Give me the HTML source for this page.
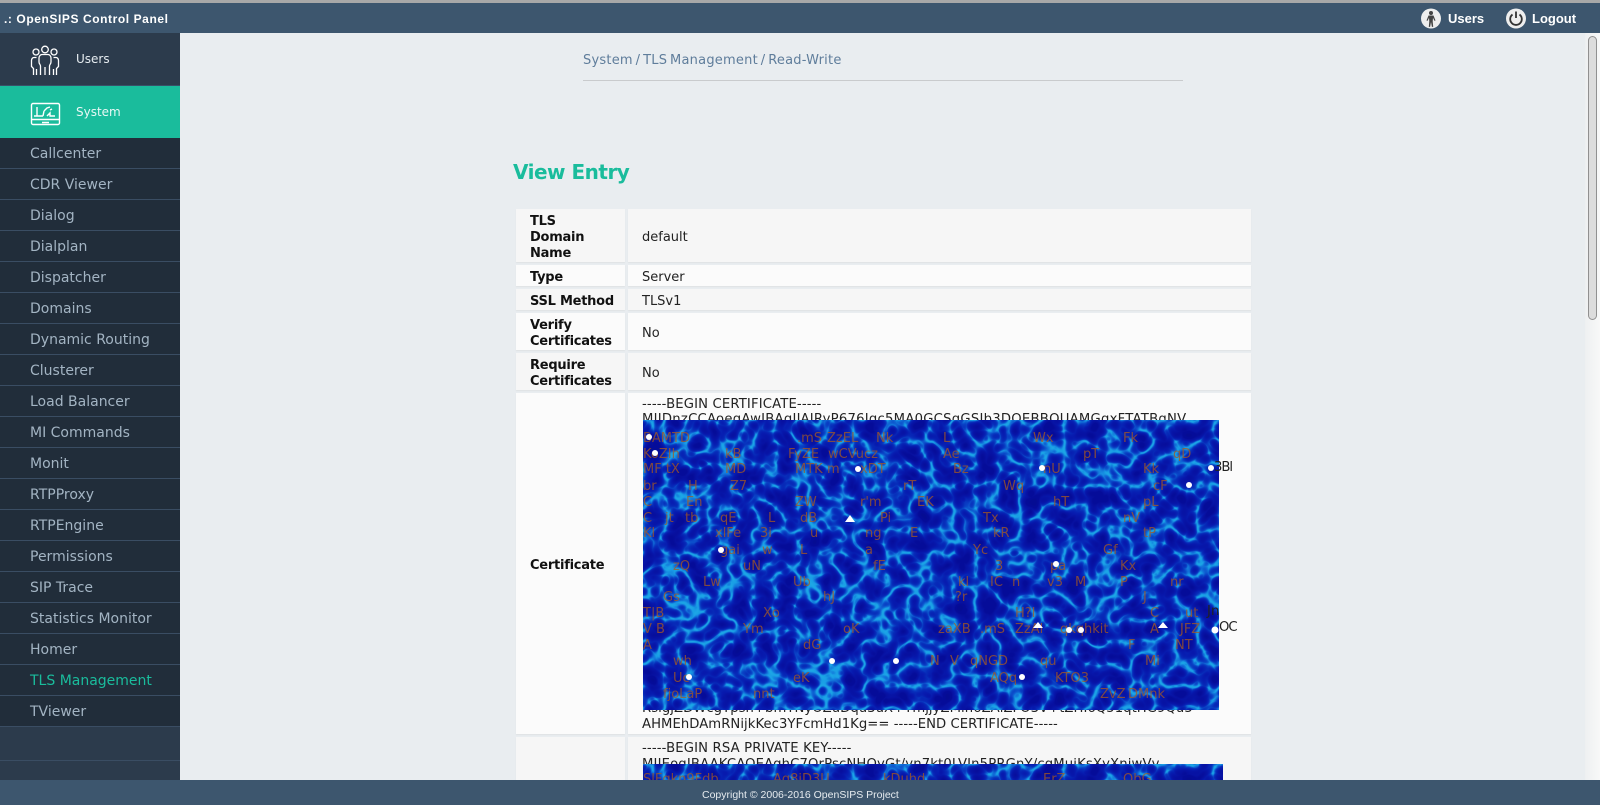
<!DOCTYPE html>
<html><head><meta charset="utf-8"><title>OpenSIPS Control Panel</title>
<style>
html,body{margin:0;padding:0;width:1600px;height:805px;overflow:hidden;background:#e9edf0}
body{position:relative;font-family:"DejaVu Sans",sans-serif}
.a{position:absolute;white-space:nowrap}
#top{position:absolute;left:0;top:0;width:1600px;height:33px;background:#3d566e;border-top:3px solid #a8a8a8;box-sizing:border-box;z-index:5}
#foot{position:absolute;left:0;top:780px;width:1600px;height:25px;background:#3d566e;z-index:5}
#side{position:absolute;left:0;top:33px;width:180px;height:747px;background:#2c3b4c}
.it{position:absolute;left:0;width:180px;height:30px;border-bottom:1px solid #3a4d63;background:#212d3a;color:#a3b4c3;font-size:14px;line-height:32px;text-indent:30px}
.c{position:absolute;background:#f6f6f6;box-shadow:0 1px 1px #dfe2e4}
.c.w{background:#fbfbfb}
.l{position:absolute;left:530px;font:bold 13px/16px "DejaVu Sans",sans-serif;color:#111;letter-spacing:-.25px}
.v{position:absolute;left:642px;font-size:13px;line-height:16px;color:#222;white-space:nowrap;letter-spacing:0}
.m{position:absolute;left:642px;font-size:13.200px;line-height:16px;color:#222;white-space:nowrap;letter-spacing:.15px}
svg text{font-family:"DejaVu Sans",sans-serif;font-size:13px}
</style></head><body>

<div id="top"></div>
<div class="a" style="left:4px;top:12px;font:bold 12px/15px 'Liberation Sans',sans-serif;color:#fff;letter-spacing:.58px;z-index:6">.: OpenSIPS Control Panel</div>
<svg class="a" style="left:1420px;top:7px;z-index:6" width="110" height="24" viewBox="0 0 110 24">
<circle cx="11" cy="11.500" r="10" fill="#eee"/>
<circle cx="11" cy="6" r="2" fill="#444"/>
<path d="M8.500 8.500h5l2 5-1 .4-1.500-3-.3 3.500.5 5.500h-1.300L11 15l-.9 4.900H8.800l.5-5.500-.3-3.500-1.500 3-1-.4z" fill="#444"/>
<circle cx="96" cy="11.500" r="10" fill="#eee"/>
<path d="M92.500 7.500a5.800 5.800 0 1 0 7 0" fill="none" stroke="#333" stroke-width="1.800"/>
<path d="M96 4.500v6.500" stroke="#333" stroke-width="1.800"/>
</svg>
<div class="a" style="left:1448px;top:11px;font:bold 13px/15px 'Liberation Sans',sans-serif;color:#fff;z-index:6">Users</div>
<div class="a" style="left:1532px;top:11px;font:bold 13px/15px 'Liberation Sans',sans-serif;color:#fff;z-index:6">Logout</div>

<div id="side">
<div style="position:absolute;left:0;top:0;width:180px;height:52px;background:#2c3b4c;border-bottom:1px solid #3a5068"></div>
<div style="position:absolute;left:0;top:53px;width:180px;height:52px;background:#1abc9c"></div>
<div class="it" style="top:105px">Callcenter</div>
<div class="it" style="top:136px">CDR Viewer</div>
<div class="it" style="top:167px">Dialog</div>
<div class="it" style="top:198px">Dialplan</div>
<div class="it" style="top:229px">Dispatcher</div>
<div class="it" style="top:260px">Domains</div>
<div class="it" style="top:291px">Dynamic Routing</div>
<div class="it" style="top:322px">Clusterer</div>
<div class="it" style="top:353px">Load Balancer</div>
<div class="it" style="top:384px">MI Commands</div>
<div class="it" style="top:415px">Monit</div>
<div class="it" style="top:446px">RTPProxy</div>
<div class="it" style="top:477px">RTPEngine</div>
<div class="it" style="top:508px">Permissions</div>
<div class="it" style="top:539px">SIP Trace</div>
<div class="it" style="top:570px">Statistics Monitor</div>
<div class="it" style="top:601px">Homer</div>
<div class="it" style="top:632px;color:#1abc9c">TLS Management</div>
<div class="it" style="top:663px">TViewer</div>
<div style="position:absolute;left:0;top:727px;width:180px;height:1px;background:#3a4d63"></div>
</div>
<svg class="a" style="left:30px;top:44px" width="32" height="34" viewBox="0 0 32 34" fill="none" stroke="#fff" stroke-width="1.300">
<circle cx="6" cy="8" r="3"/><circle cx="15" cy="5.500" r="3.300"/><circle cx="24" cy="8" r="3"/>
<path d="M10.500 31V22c0-1.500-1.500-2-1.500-4v-4c0-2 1.500-3.500 3-3.500h6c1.500 0 3 1.500 3 3.500v4c0 2-1.500 2.500-1.500 4v9"/>
<path d="M15 23v8"/>
<path d="M6.500 13.500H4c-1.500 0-2.500 1.500-2.500 3v6l2 2v6.500M6.500 25v6"/>
<path d="M23.500 13.500H26c1.500 0 2.500 1.500 2.500 3v6l-2 2v6.500M23.500 25v6"/>
</svg>
<svg class="a" style="left:30px;top:102px" width="31" height="25" viewBox="0 0 31 25" fill="none" stroke="#fff" stroke-width="1.400">
<rect x="1.500" y="1.500" width="28" height="21" rx="1.500"/>
<path d="M1.500 17.500h28M12 20.500h7"/>
<path d="M7 5v9h6M7 14H4M13 14l1-5M14 9l3-3 3-1M17 14l3-3v3h5M20 8l2-1"/>
</svg>
<div class="a" style="left:76px;top:52px;font-size:12px;line-height:15px;color:#e6ecf0">Users</div>
<div class="a" style="left:76px;top:105px;font-size:12px;line-height:15px;color:#e8f8f5">System</div>

<div class="a" style="left:583px;top:53px;font-size:13px;line-height:16px;color:#5f7d9b;letter-spacing:.22px;word-spacing:-1.500px">System / TLS Management / Read-Write</div>
<div class="a" style="left:583px;top:80px;width:600px;height:1px;background:#c9cbcd"></div>
<div class="a" style="left:513px;top:159px;font:bold 20px/26px 'DejaVu Sans',sans-serif;color:#1abc9c;letter-spacing:-.5px">View Entry</div>

<div class="c" style="left:516px;top:209px;width:109px;height:53px"></div><div class="c" style="left:628px;top:209px;width:623px;height:53px"></div>
<div class="c w" style="left:516px;top:265px;width:109px;height:21px"></div><div class="c w" style="left:628px;top:265px;width:623px;height:21px"></div>
<div class="c" style="left:516px;top:289px;width:109px;height:21px"></div><div class="c" style="left:628px;top:289px;width:623px;height:21px"></div>
<div class="c w" style="left:516px;top:313px;width:109px;height:37px"></div><div class="c w" style="left:628px;top:313px;width:623px;height:37px"></div>
<div class="c" style="left:516px;top:353px;width:109px;height:37px"></div><div class="c" style="left:628px;top:353px;width:623px;height:37px"></div>
<div class="c w" style="left:516px;top:393px;width:109px;height:341px"></div><div class="c w" style="left:628px;top:393px;width:623px;height:341px"></div>
<div class="c" style="left:516px;top:737px;width:109px;height:43px"></div><div class="c" style="left:628px;top:737px;width:623px;height:43px"></div>

<div class="l" style="top:214px">TLS<br>Domain<br>Name</div>
<div class="l" style="top:270px">Type</div>
<div class="l" style="top:294px">SSL Method</div>
<div class="l" style="top:318px">Verify<br>Certificates</div>
<div class="l" style="top:358px">Require<br>Certificates</div>
<div class="l" style="top:558px">Certificate</div>
<div class="v" style="top:230px">default</div>
<div class="v" style="top:270px">Server</div>
<div class="v" style="top:294px">TLSv1</div>
<div class="v" style="top:326px">No</div>
<div class="v" style="top:366px">No</div>

<div class="m" style="top:397px">-----BEGIN CERTIFICATE-----</div>
<div class="m" style="top:412px;letter-spacing:.25px">MIIDnzCCAoegAwIBAgIJAIRyP676Iqc5MA0GCSqGSIb3DQEBBQUAMGgxFTATBgNV</div>
<div class="m" style="top:701px;letter-spacing:.05px">RslgjZDWcgTpsn+bmTNyOZuDqu3uX+YmjjyZMlh6ZAlZFO3V+tZHI6Q51qtHG9Qu5</div>
<div class="m" style="top:717px;letter-spacing:.05px">AHMEhDAmRNijkKec3YFcmHd1Kg== -----END CERTIFICATE-----</div>
<div class="m" style="top:741px">-----BEGIN RSA PRIVATE KEY-----</div>
<div class="m" style="top:757px">MIIEogIBAAKCAQEAqhC7OrPscNHOyGt/vn7kt0LVIn5PRGnY/cgMuiKsXyXniwVv</div>

<svg class="a" style="left:643px;top:420px;width:576px;height:290px" width="576" height="290" viewBox="0 0 576 290">
<defs>
<filter id="wt" x="0" y="0" width="100%" height="100%" color-interpolation-filters="sRGB">
<feTurbulence type="turbulence" baseFrequency=".045" numOctaves="2" seed="11"/>
<feColorMatrix values="0 0 0 1 0 0 0 0 1 0 0 0 0 1 0 0 0 0 0 1"/>
<feComponentTransfer>
<feFuncR type="table" tableValues=".12 .10 .07 .04 .03 .03 .03 .03 .03 .03 .03 .02 .02 .02 .02 .02 .02 .02 .02 .02 .02"/>
<feFuncG type="table" tableValues=".66 .62 .44 .27 .18 .14 .11 .09 .08 .07 .06 .05 .05 .05 .05 .05 .05 .05 .05 .05 .05"/>
<feFuncB type="table" tableValues=".90 .90 .85 .78 .73 .71 .69 .67 .65 .64 .62 .60 .60 .60 .58 .58 .58 .58 .58 .58 .58"/>
</feComponentTransfer>
</filter>
</defs>
<rect width="576" height="290" fill="#0a2cb0" filter="url(#wt)"/>
<g fill="#a85a20" opacity=".75">
<text x="0" y="22">BAMTD</text><text x="154" y="22">.mS</text><text x="184" y="22">ZzEL</text><text x="233" y="22">Nk</text><text x="300" y="22">L</text><text x="390" y="22">Wx</text><text x="480" y="22">Fk</text>
<text x="0" y="38">KoZIh</text><text x="82" y="38">kB</text><text x="145" y="38">FyZE</text><text x="185" y="38">wCVucz</text><text x="300" y="38">Ae</text><text x="440" y="38">pT</text><text x="530" y="38">qD</text>
<text x="0" y="53">MF tX</text><text x="82" y="53">MD</text><text x="152" y="53">MTK</text><text x="184" y="53">m</text><text x="217" y="53">xDT</text><text x="310" y="53">Bz</text><text x="400" y="53">nU</text><text x="500" y="53">Kk</text>
<text x="0" y="70">br</text><text x="45" y="70">H</text><text x="87" y="70">Z7</text><text x="260" y="70">rT</text><text x="360" y="70">Wq</text><text x="510" y="70">cF</text>
<text x="0" y="86">C</text><text x="43" y="86">En</text><text x="152" y="86">ZW</text><text x="217" y="86">r'm</text><text x="274" y="86">EK</text><text x="410" y="86">hT</text><text x="500" y="86">pL</text>
<text x="0" y="102">C</text><text x="22" y="102">jt</text><text x="42" y="102">tb</text><text x="77" y="102">qE</text><text x="125" y="102">L</text><text x="157" y="102">dB</text><text x="237" y="102">Pi</text><text x="340" y="102">Tx</text><text x="480" y="102">nV</text>
<text x="0" y="117">Kl</text><text x="72" y="117">xlFe</text><text x="117" y="117">3i</text><text x="167" y="117">u</text><text x="222" y="117">ng</text><text x="267" y="117">E</text><text x="350" y="117">kR</text><text x="500" y="117">tP</text>
<text x="77" y="134">gai</text><text x="119" y="134">w</text><text x="157" y="134">L</text><text x="222" y="134">a</text><text x="330" y="134">Yc</text><text x="460" y="134">Gf</text>
<text x="30" y="150">zQ</text><text x="352" y="150">3</text><text x="407" y="150">pa</text><text x="477" y="150">Kx</text><text x="100" y="150">uN</text><text x="230" y="150">fE</text>
<text x="60" y="166">Lw</text><text x="150" y="166">Ub</text><text x="315" y="166">kl</text><text x="347" y="166">IC</text><text x="369" y="166">n</text><text x="404" y="166">v3</text><text x="432" y="166">M</text><text x="477" y="166">P</text><text x="527" y="166">nr</text>
<text x="20" y="181">Gs</text><text x="180" y="181">hJ</text><text x="312" y="181">?r</text><text x="500" y="181">J</text>
<text x="0" y="197">T|B</text><text x="120" y="197">Xo</text><text x="372" y="197">H?I</text><text x="507" y="197">C</text><text x="542" y="197">ut</text>
<text x="0" y="213">V B</text><text x="100" y="213">Ym</text><text x="200" y="213">oK</text><text x="295" y="213">zaXB</text><text x="337" y="213">.mS</text><text x="372" y="213">ZzAl</text><text x="417" y="213">qkqhkit</text><text x="507" y="213">A</text><text x="537" y="213">JFZ</text>
<text x="0" y="229">A</text><text x="160" y="229">dG</text><text x="485" y="229">F</text><text x="532" y="229">NT</text>
<text x="30" y="245">wh</text><text x="287" y="245">N</text><text x="307" y="245">V</text><text x="327" y="245">qNGD</text><text x="397" y="245">qu</text><text x="502" y="245">Mi</text>
<text x="30" y="262">Uc</text><text x="150" y="262">eK</text><text x="347" y="262">AQq</text><text x="412" y="262">KTO3</text>
<text x="20" y="278">fjoLaP</text><text x="110" y="278">nnt</text><text x="457" y="278">ZvZ</text><text x="485" y="278">DMnk</text>
</g>
<g fill="#fff">
<circle cx="12" cy="33" r="3"/><circle cx="215" cy="49" r="3"/><circle cx="78" cy="130" r="3"/><circle cx="399" cy="48" r="3"/><circle cx="568" cy="48" r="3"/><circle cx="546" cy="65" r="3"/><circle cx="413" cy="144" r="3"/><circle cx="426" cy="210" r="3"/><circle cx="438" cy="210" r="3"/><circle cx="572" cy="210" r="3.500"/><circle cx="189" cy="241" r="3"/><circle cx="253" cy="241" r="3"/><circle cx="46" cy="257" r="3"/><circle cx="379" cy="257" r="3"/><circle cx="6" cy="17" r="3"/>
<path d="M202 102l5-7 5 7zM390 208l5-6 5 6zM515 208l5-6 5 6z"/>
</g>
</svg>
<div class="m" style="top:460px;left:1214px;letter-spacing:-1px">3Bl</div>
<div class="m" style="top:604px;left:1207px">Jn</div>
<div class="m" style="top:620px;left:1219px;letter-spacing:-1px">OC</div>

<svg class="a" style="left:643px;top:764px;width:580px;height:16px" width="580" height="16" viewBox="0 0 580 16">
<rect width="580" height="16" fill="#0a2cb0" filter="url(#wt)"/>
<g fill="#a85a20" opacity=".75"><text x="0" y="19">SlFgkn9Fdb</text><text x="130" y="19">Ag8iD3U</text><text x="240" y="19">kDuhd</text><text x="400" y="19">ErZ</text><text x="480" y="19">QbG</text></g>
</svg>

<div style="position:absolute;left:1585px;top:33px;width:15px;height:747px;background:linear-gradient(90deg,#eef0f1,#f8f8f8)"></div>
<div style="position:absolute;left:1588px;top:36px;width:9px;height:284px;background:#dcdcdc;border:1px solid #909090;border-radius:5px;box-sizing:border-box"></div>

<div id="foot"></div>
<div class="a" style="left:702px;top:789px;font:10.500px/13px 'Liberation Sans',sans-serif;color:#e6ebef;z-index:6">Copyright © 2006-2016 OpenSIPS Project</div>
</body></html>
